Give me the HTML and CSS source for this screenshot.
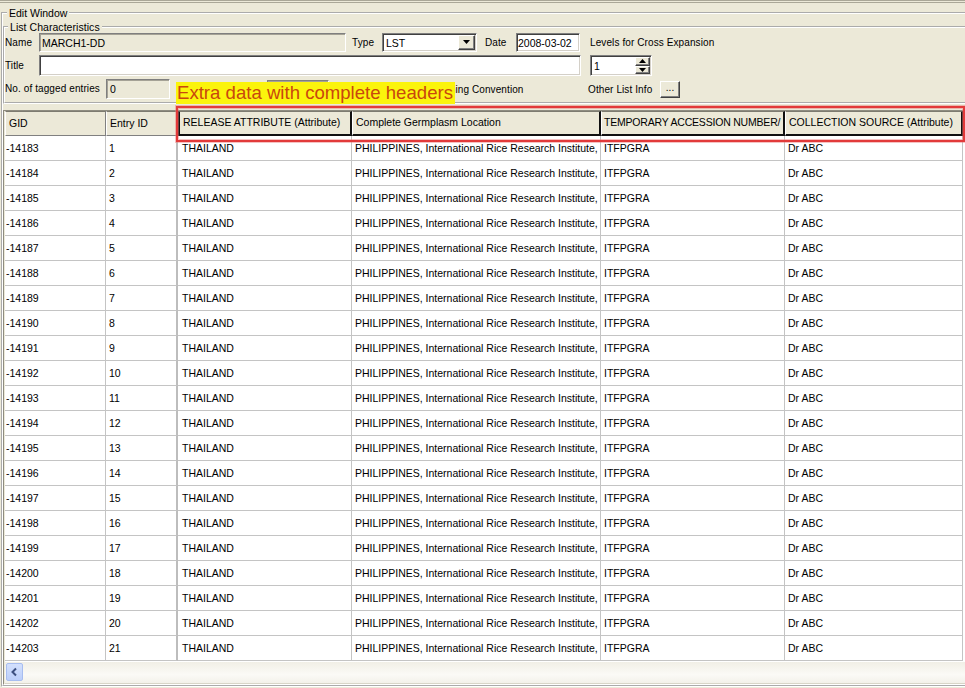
FILE: index.html
```html
<!DOCTYPE html>
<html>
<head>
<meta charset="utf-8">
<link rel="stylesheet" href="styles.css">
</head>
<body>
<div class="app">
  <fieldset class="edit">
    <legend>Edit Window</legend>
    <fieldset class="listchar">
      <legend>List Characteristics</legend>
      <div class="row r1">
        <span class="lbl w34">Name</span>
        <div class="field disabled name">MARCH1-DD</div>
        <span class="lbl type">Type</span>
        <div class="field combo">
          <span class="combo-val">LST</span>
          <span class="ddbtn"><svg width="9" height="5" viewBox="0 0 9 5"><path d="M1 0h7L4.5 4z" fill="#000"/></svg></span>
        </div>
        <span class="lbl date-lbl">Date</span>
        <div class="field date">2008-03-02</div>
        <span class="lbl levels">Levels for Cross Expansion</span>
      </div>
      <div class="row r2">
        <span class="lbl w34">Title</span>
        <div class="field title"></div>
        <div class="field spinner">
          <span class="spin-val">1</span>
          <span class="spinbtns">
            <span class="sbtn"><svg width="7" height="4" viewBox="0 0 7 4"><path d="M0 4h7L3.5 0z" fill="#000"/></svg></span>
            <span class="sbtn"><svg width="7" height="4" viewBox="0 0 7 4"><path d="M0 0h7L3.5 4z" fill="#000"/></svg></span>
          </span>
        </div>
      </div>
      <div class="row r3">
        <span class="lbl tagged">No. of tagged entries</span>
        <div class="field disabled tag">0</div>
        <div class="field disabled hidden-field"></div>
        <span class="lbl naming">Naming Convention</span>
        <span class="lbl other">Other List Info</span>
        <span class="btn dots">...</span>
      </div>
    </fieldset>
    <div class="pane">
      <div class="viewport">
        <table class="grid">
          <thead>
            <tr>
              <th class="c1">GID</th>
              <th class="c2">Entry ID</th>
              <th class="c3 ex first">RELEASE ATTRIBUTE (Attribute)</th>
              <th class="c4 ex">Complete Germplasm Location</th>
              <th class="c5 ex tight">TEMPORARY ACCESSION NUMBER/</th>
              <th class="c6 ex">COLLECTION SOURCE (Attribute)</th>
            </tr>
          </thead>
          <tbody id="rows"></tbody>
        </table>
      </div>
      <div class="hscroll">
        <span class="sarrow"><svg width="9" height="10" viewBox="0 0 9 10"><path d="M6 1.5L2.5 5L6 8.5" fill="none" stroke="#3d5080" stroke-width="2"/></svg></span>
      </div>
    </div>
  </fieldset>
  <div class="note">Extra data with complete headers</div>
  <div class="redbox"></div>
</div>
<script>
  var tb = document.getElementById('rows');
  var html = '';
  for (var i = 0; i < 21; i++) {
    html += '<tr><td class="g">-' + (14183 + i) + '</td><td class="e">' + (i + 1) +
      '</td><td class="r">THAILAND</td><td>PHILIPPINES, International Rice Research Institute,</td><td>ITFPGRA</td><td>Dr ABC</td></tr>';
  }
  tb.innerHTML = html;
</script>
</body>
</html>
```
FILE: styles.css
```css
html, body {
  margin: 0;
  padding: 0;
}
body {
  width: 965px;
  height: 688px;
  overflow: hidden;
  background: #ECE9D8;
  font-family: "Liberation Sans", Arial, sans-serif;
  font-size: 10px;
  color: #000;
  position: relative;
}
.app {
  height: 688px;
  box-sizing: border-box;
  border-top: 3px double #aaa797;
  width: 975px;
}
fieldset {
  border: 2px groove #ffffff;
  margin: 0;
  padding: 0;
  min-width: 0;
}
legend {
  font-size: 10.5px;
  line-height: 12px;
  padding: 0 2px;
}
.edit {
  margin: 4px 0 0 1px;
  padding: 0;
}
.edit > legend {
  margin-left: 4px;
}
.listchar {
  margin: 2px 0 0 0;
  padding: 0 0 3px 0;
}
.listchar > legend {
  margin-left: 3px;
  letter-spacing: 0.05px;
}
.row {
  display: flex;
  align-items: center;
}
.r1 { height: 19px; }
.r2 { height: 21px; margin-top: 3px; }
.r3 { height: 20px; margin-top: 3px; }
.lbl {
  letter-spacing: 0.1px;
  white-space: nowrap;
}
.w34 { width: 34px; flex: none; }
.field {
  box-sizing: border-box;
  flex: none;
  background: #fff;
  border: 1px solid;
  border-color: #7f7f7f #ffffff #ffffff #7f7f7f;
  box-shadow: inset 1px 1px #404040, inset -1px -1px #d4d0c8;
  height: 100%;
  display: flex;
  align-items: center;
  padding-left: 2px;
  font-size: 10.5px;
  white-space: nowrap;
  position: relative;
}
.field.disabled {
  background: #ECE9D8;
  box-shadow: inset 1px 1px #a5a296, inset -1px -1px #ECE9D8;
}
.name { width: 307px; }
.type { margin-left: 6px; width: 30px; }
.combo { width: 95px; padding-left: 3px; }
.combo-val { flex: 1; }
.ddbtn, .sbtn, .btn {
  box-sizing: border-box;
  background: #ECE9D8;
  border: 1px solid;
  border-color: #ffffff #404040 #404040 #ffffff;
  box-shadow: inset -1px -1px #808080;
  display: flex;
  align-items: center;
  justify-content: center;
}
.ddbtn {
  width: 17px;
  height: 15px;
  margin-right: 1px;
}
.date-lbl { margin-left: 8px; width: 31px; }
.date { width: 64px; padding-left: 1px; }
.levels { margin-left: 10px; }
.title { width: 542px; }
.spinner { width: 62px; margin-left: 9px; padding-left: 3px; }
.spin-val { flex: 1; }
.spinbtns {
  display: flex;
  flex-direction: column;
  width: 15px;
  height: 17px;
  margin-right: 1px;
}
.sbtn { flex: 1; }
.tagged { width: 101px; flex: none; margin-top: -2px; }
.tag { width: 64px; padding-left: 3px; }
.hidden-field { width: 62px; height: 19px; margin-left: 97px; }
.naming { margin-left: 105px; width: 154px; flex: none; }
.other { width: 72px; flex: none; }
.dots {
  width: 20px;
  height: 17px;
  font-size: 10px;
  line-height: 10px;
  align-items: flex-end;
  padding-bottom: 4px;
}
.pane {
  margin-top: 6px;
  height: 575px;
  box-sizing: border-box;
  border-top: 1px solid #8e8c80;
  border-left: 1px solid #8e8c80;
  border-bottom: 1px solid #ffffff;
  padding-left: 1px;
  display: flex;
  flex-direction: column;
  width: 965px;
}
.viewport {
  height: 551px;
  overflow: hidden;
  background: #fff;
  flex: none;
}
.grid {
  table-layout: fixed;
  border-collapse: separate;
  border-spacing: 0;
  width: 958px;
  font-size: 10.5px;
}
.grid th, .grid td {
  box-sizing: border-box;
  height: 25px;
  padding: 0 3px;
  text-align: left;
  white-space: nowrap;
  overflow: hidden;
  font-weight: normal;
}
.grid th {
  background: #ECE9D8;
  border-top: 1px solid #7d7b70;
  border-bottom: 1px solid #808080;
  border-right: 1px solid #808080;
  border-left: 1px solid #fff;
  padding-bottom: 2px;
}
.grid th.ex {
  border-left: 1px solid #fff;
  border-right: 2px solid #111;
  border-bottom: 2px solid #111;
}
.grid th.first { border-left: 2px solid #111; }
.grid th.tight { letter-spacing: -0.2px; padding-left: 2px; }
.c1 { width: 101px; }
.c2 { width: 72px; }
.c3 { width: 174px; }
.c4 { width: 249px; }
.c5 { width: 184px; }
.c6 { width: 178px; }
.grid td {
  border-right: 1px solid #c4c4c4;
  border-bottom: 1px solid #c4c4c4;
  padding-left: 3px;
  padding-bottom: 1px;
}
.grid td.g { padding-left: 1px; }
.grid td.e { border-right: 2px solid #bdbdbd; }
.grid td.r { padding-left: 4px; }
.hscroll {
  height: 22px;
  flex: none;
  box-sizing: border-box;
  background: linear-gradient(#f1efe6, #fbfaf6 60%, #f3f1ea);
  border-bottom: 1px solid #d8d5c8;
  padding: 1px 0 0 1px;
}
.sarrow {
  display: flex;
  align-items: center;
  justify-content: center;
  width: 17px;
  height: 18px;
  box-sizing: border-box;
  border: 1px solid #a7bdf0;
  border-radius: 2px;
  background: linear-gradient(#d3e0fd, #bccffa);
}
.note {
  position: absolute;
  left: 176px;
  top: 82px;
  width: 279px;
  height: 22px;
  box-sizing: border-box;
  background: #fbf40c;
  color: #c9470e;
  font-size: 18.6px;
  line-height: 22px;
  padding-left: 1px;
  white-space: nowrap;
}
.redbox {
  position: absolute;
  left: 176px;
  top: 106px;
  width: 789px;
  height: 36px;
  box-sizing: border-box;
  border: 2px solid #e23a3a;
  box-shadow: 0 0 0 1px rgba(236, 120, 120, 0.45), inset 0 0 0 1px rgba(236, 120, 120, 0.45);
}
```
